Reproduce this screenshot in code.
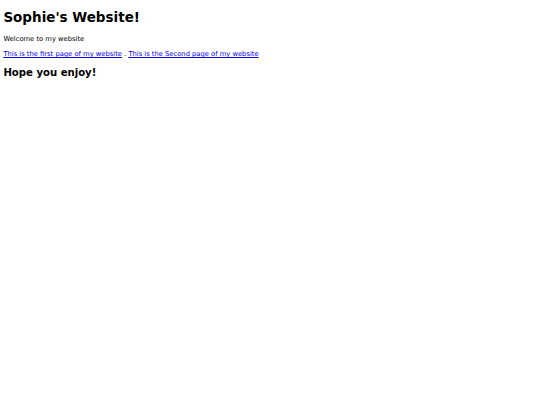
export default function App() {
  return (
    <div className="px-[3.375px] text-black">
      <div className="font-['DejaVu_Sans',sans-serif]">
        <h1 className="text-[13.5px] font-bold leading-[1.164] pt-[10px] mb-[9.5px]">Sophie's Website!</h1>
        <p className="text-[6.75px] leading-[1.2] my-[7px]">Welcome to my website</p>
        <p className="text-[6.75px] leading-[1.2] my-[7px]">
          <a href="#" className="text-[#0000ee] underline">This is the first page of my website</a>
          {" . "}
          <a href="#" className="text-[#0000ee] underline">This is the Second page of my website</a>
        </p>
        <h2 className="text-[10.125px] font-bold leading-[1.164] mt-[8.4px]">Hope you enjoy!</h2>
      </div>
    </div>
  );
}
